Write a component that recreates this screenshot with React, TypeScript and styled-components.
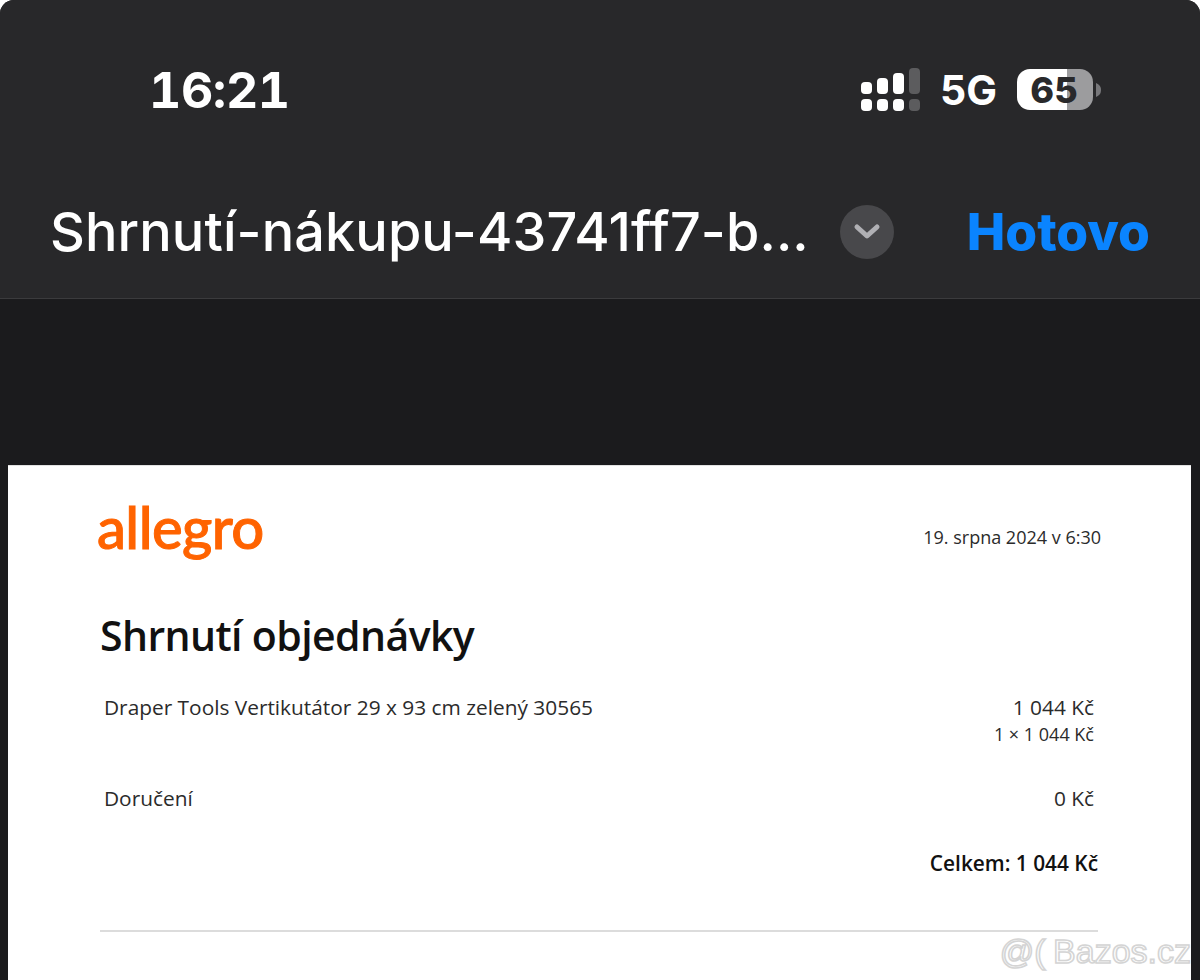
import React from 'react';
import styled, { createGlobalStyle } from 'styled-components';

const GlobalStyle = createGlobalStyle`
  html, body {
    margin: 0;
    padding: 0;
    background: #fff;
  }
`;

const Screen = styled.div`
  position: relative;
  width: 1200px;
  height: 980px;
  overflow: hidden;
  background: #1b1b1d;
  border-radius: 14px 14px 0 0;
  display: flex;
  flex-direction: column;
`;

const Header = styled.header`
  height: 298px;
  background: #28282a;
  border-bottom: 1px solid #3b3b3d;
  display: flex;
  flex-direction: column;
  font-family: Inter, "Liberation Sans", sans-serif;
  color: #fff;
`;

const StatusBar = styled.div`
  height: 180px;
  padding: 0 97px 0 149px;
  display: flex;
  align-items: center;
  justify-content: space-between;
`;

const Time = styled.div`
  font-size: 50px;
  font-weight: 700;
  line-height: 1;
  font-variant-numeric: tabular-nums;
  letter-spacing: -0.4px;
`;

const StatusIcons = styled.div`
  display: flex;
  align-items: center;
  gap: 20px;
`;

const Network = styled.div`
  font-size: 41px;
  font-weight: 700;
  line-height: 1;
`;

const NavBar = styled.div`
  height: 104px;
  padding: 0 50px;
  display: flex;
  align-items: center;
`;

const FileName = styled.div`
  font-size: 54px;
  font-weight: 500;
  line-height: 1;
  white-space: nowrap;
  letter-spacing: 0.1px;
`;

const Chevron = styled.div`
  width: 54px;
  height: 54px;
  margin-left: 31px;
  border-radius: 50%;
  background: #48484b;
  display: flex;
  align-items: center;
  justify-content: center;
`;

const Done = styled.div`
  margin-left: auto;
  color: #0a84ff;
  font-size: 51.5px;
  font-weight: 800;
  line-height: 1;
`;

const Paper = styled.main`
  margin: 166px 9px 0 8px;
  flex: 1;
  background: #fff;
  border-top: 1px solid #e2e2e2;
  padding: 0 92px;
  display: flex;
  flex-direction: column;
  font-family: "Open Sans", "Noto Sans", sans-serif;
  color: #2b2b2b;
`;

const DocTop = styled.div`
  height: 141px;
  padding-top: 32px;
  box-sizing: border-box;
  display: flex;
  justify-content: space-between;
  align-items: flex-start;
`;

const Logo = styled.div`
  margin-left: -3px;
  font-family: Lato, "Open Sans", sans-serif;
  color: #ff6300;
  font-size: 58px;
  font-weight: 500;
  line-height: 1;
  letter-spacing: -0.6px;
  -webkit-text-stroke: 1px #ff6300;
`;

const DocDate = styled.div`
  margin: 27px -2px 0 0;
  font-size: 18px;
  line-height: 24px;
`;

const Title = styled.h1`
  margin: 0;
  font-size: 41px;
  font-weight: 600;
  line-height: 56px;
  color: #111;
  letter-spacing: -0.6px;
`;

const Rows = styled.div`
  margin-top: 31px;
  padding: 0 5px 0 4px;
`;

const Row = styled.div<{ $height: number }>`
  height: ${p => p.$height}px;
  display: flex;
  justify-content: space-between;
  font-size: 20.85px;
  line-height: 26px;
`;

const Amount = styled.div`
  text-align: right;
`;

const UnitPrice = styled.div`
  margin-top: 2px;
  font-size: 18px;
  line-height: 24px;
`;

const Total = styled.div`
  margin: 15px 1px 0 0;
  text-align: right;
  font-size: 20.85px;
  font-weight: 600;
  line-height: 26px;
  color: #111;
`;

const Rule = styled.hr`
  margin: 54px 1px 0 0;
  border: 0;
  border-top: 2px solid #dcdcdc;
`;

const Watermark = styled.div`
  position: absolute;
  right: 9px;
  bottom: 9px;
  font-family: "Liberation Sans", sans-serif;
  font-size: 34px;
  line-height: 40px;
  white-space: pre;
  color: #fff;
  word-spacing: -2px;
  -webkit-text-stroke: 1.6px #d4d4d4;
`;

const SignalIcon = () => (
  <svg width="60" height="44" viewBox="0 0 60 44">
    <rect x="1" y="14" width="11" height="12" rx="4" fill="#fff" />
    <rect x="17" y="10" width="11" height="16" rx="4" fill="#fff" />
    <rect x="33" y="5" width="11" height="21" rx="4" fill="#fff" />
    <rect x="49" y="0" width="11" height="26" rx="4" fill="#5c5c5e" />
    <rect x="1" y="31" width="11" height="12" rx="4" fill="#fff" />
    <rect x="17" y="31" width="11" height="12" rx="4" fill="#fff" />
    <rect x="33" y="31" width="11" height="12" rx="4" fill="#fff" />
    <rect x="49" y="31" width="11" height="12" rx="4" fill="#5c5c5e" />
  </svg>
);

const BatteryIcon = () => (
  <svg width="86" height="44" viewBox="0 0 86 44">
    <defs>
      <clipPath id="battery-body">
        <rect x="0" y="1" width="76" height="41" rx="13" />
      </clipPath>
    </defs>
    <g clipPath="url(#battery-body)">
      <rect x="0" y="1" width="50" height="41" fill="#fff" />
      <rect x="50" y="1" width="26" height="41" fill="#9c9c9e" />
    </g>
    <path d="M79 15 C83 17 84 19 84 22 C84 25 83 27 79 29 Z" fill="#77777a" />
    <text
      x="37"
      y="35"
      textAnchor="middle"
      fontFamily="Inter, sans-serif"
      fontSize="36"
      fontWeight="800"
      fill="#29292b"
    >
      65
    </text>
  </svg>
);

const ChevronIcon = () => (
  <svg width="28" height="18" viewBox="0 0 28 18">
    <path d="M4 4 L14 13 L24 4" fill="none" stroke="#b0b0b4" strokeWidth="5" strokeLinecap="round" strokeLinejoin="round" />
  </svg>
);

const App: React.FC = () => (
  <>
    <GlobalStyle />
    <Screen>
      <Header>
        <StatusBar>
          <Time>16:21</Time>
          <StatusIcons>
            <SignalIcon />
            <Network>5G</Network>
            <BatteryIcon />
          </StatusIcons>
        </StatusBar>
        <NavBar>
          <FileName>Shrnutí-nákupu-43741ff7-b...</FileName>
          <Chevron>
            <ChevronIcon />
          </Chevron>
          <Done>Hotovo</Done>
        </NavBar>
      </Header>
      <Paper>
        <DocTop>
          <Logo>allegro</Logo>
          <DocDate>19. srpna 2024 v 6:30</DocDate>
        </DocTop>
        <Title>Shrnutí objednávky</Title>
        <Rows>
          <Row $height={91}>
            <div>Draper Tools Vertikutátor 29 x 93 cm zelený 30565</div>
            <Amount>
              1 044 Kč
              <UnitPrice>1 × 1 044 Kč</UnitPrice>
            </Amount>
          </Row>
          <Row $height={50}>
            <div>Doručení</div>
            <Amount>0 Kč</Amount>
          </Row>
        </Rows>
        <Total>Celkem: 1 044 Kč</Total>
        <Rule />
      </Paper>
      <Watermark>@( Bazos.cz</Watermark>
    </Screen>
  </>
);

export default App;
